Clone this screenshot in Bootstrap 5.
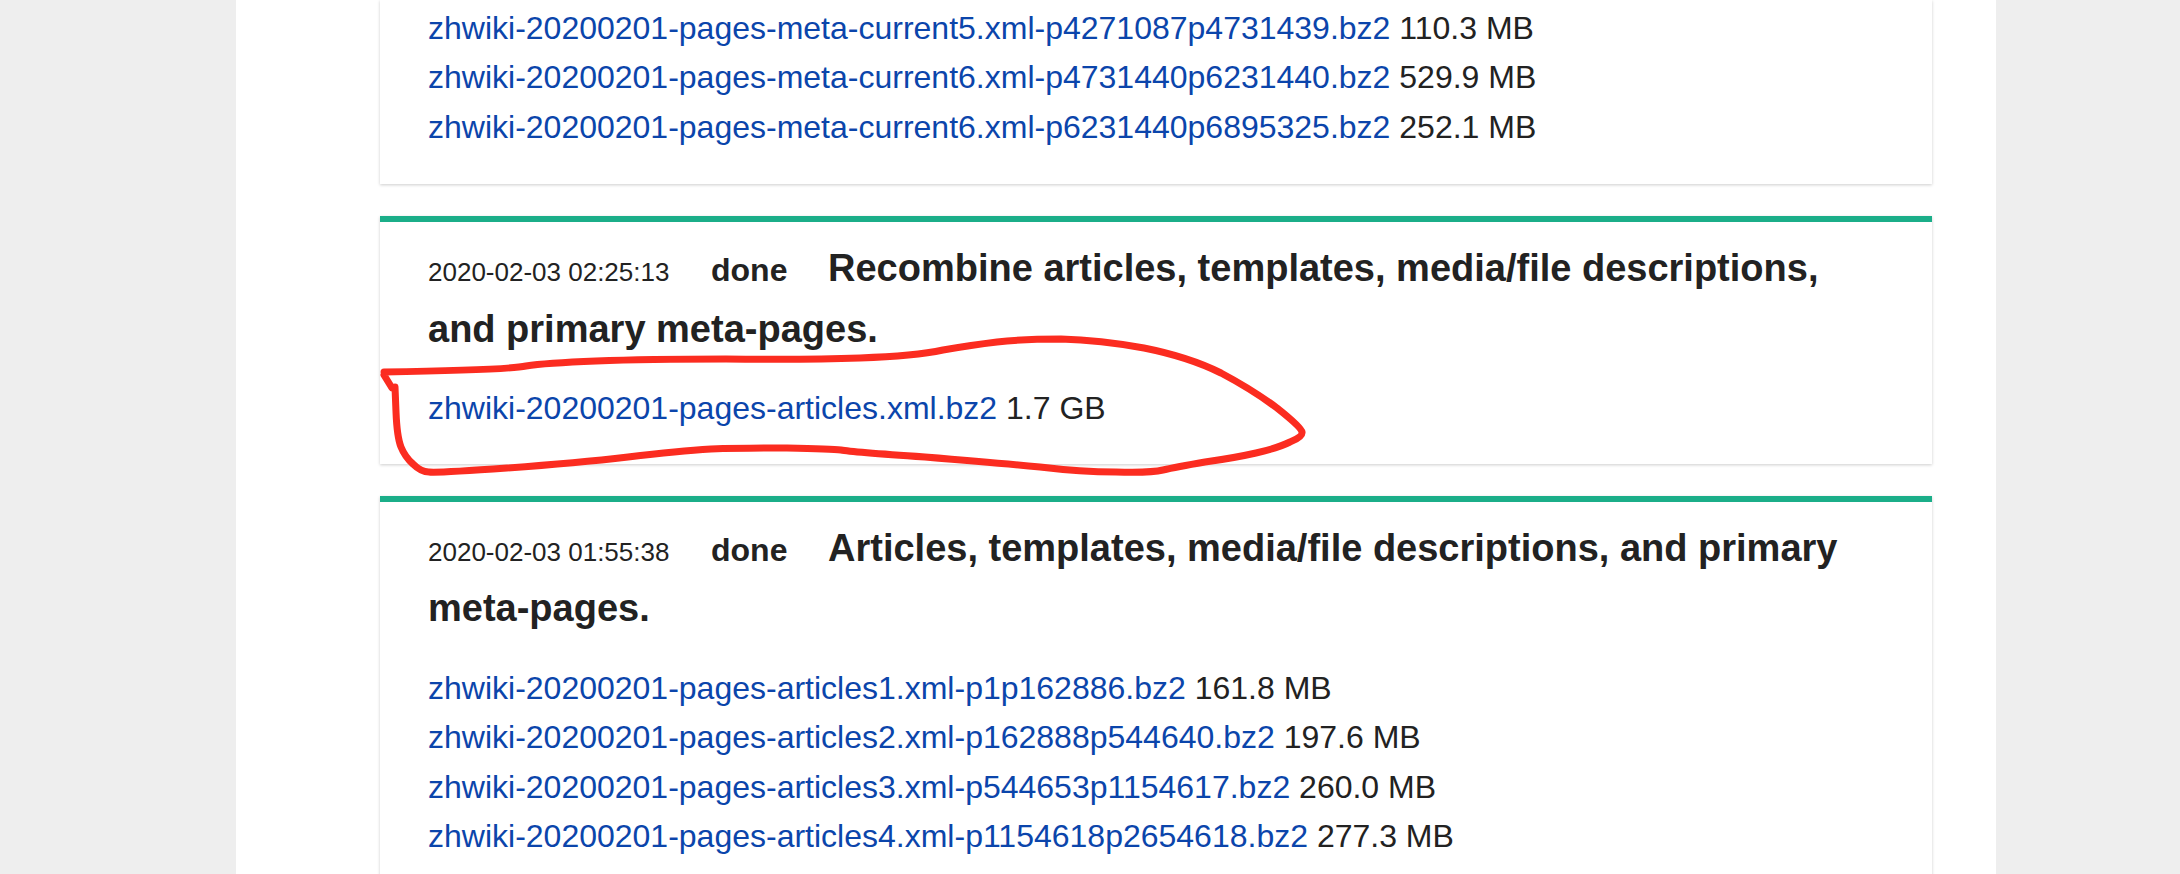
<!DOCTYPE html>
<html lang="en">
<head>
    <meta charset="UTF-8">
    <title>zhwiki dump progress</title>
    <link href="https://cdn.jsdelivr.net/npm/bootstrap@5.3.0/dist/css/bootstrap.min.css" rel="stylesheet">
    <style>
        html, body {
            height: 874px;
            overflow: hidden;
        }
        body {
            background: #eeeeee;
            font-family: "Liberation Sans", Arial, sans-serif;
            color: #222222;
        }
        .page-sheet {
            position: relative;
            width: 1760px;
            margin-left: 236px;
            height: 874px;
            overflow: hidden;
            padding: 0 64px 0 144px;
            background: #ffffff;
        }
        .dump-step {
            padding: 16px 48px 30px;
            margin-bottom: 32px;
            background: #ffffff;
            border-top: 6px solid #1bae89;
            box-shadow: 0 1px 3px rgba(0, 0, 0, .2);
        }
        .dump-step.cut-off {
            padding: 3.5px 48px 32px;
            border-top: 0;
        }
        .step-head {
            margin: 0 0 25px;
            font-size: 38px;
            line-height: 60.5px;
        }
        .step-time {
            font-size: 26px;
            line-height: 1;
            margin-right: 31px;
        }
        .step-status {
            font-size: 32px;
            line-height: 1;
            font-weight: 700;
            margin-right: 30px;
        }
        .step-title {
            font-weight: 700;
        }
        .file-list {
            font-size: 32px;
            line-height: 49.5px;
        }
        .file-list a {
            color: #0b45ab;
            text-decoration: none;
        }
        .red-circle {
            position: absolute;
            left: -236px;
            top: 0;
            pointer-events: none;
        }
    </style>
</head>
<body>
<div class="page-sheet">
    <div class="dump-step cut-off">
        <ul class="file-list list-unstyled mb-0">
            <li><a href="#">zhwiki-20200201-pages-meta-current5.xml-p4271087p4731439.bz2</a> 110.3 MB</li>
            <li><a href="#">zhwiki-20200201-pages-meta-current6.xml-p4731440p6231440.bz2</a> 529.9 MB</li>
            <li><a href="#">zhwiki-20200201-pages-meta-current6.xml-p6231440p6895325.bz2</a> 252.1 MB</li>
        </ul>
    </div>
    <div class="dump-step">
        <p class="step-head">
            <span class="step-time">2020-02-03 02:25:13</span>
            <span class="step-status">done</span>
            <span class="step-title">Recombine articles, templates, media/file descriptions, and primary meta-pages.</span>
        </p>
        <ul class="file-list list-unstyled mb-0">
            <li><a href="#">zhwiki-20200201-pages-articles.xml.bz2</a> 1.7 GB</li>
        </ul>
    </div>
    <div class="dump-step">
        <p class="step-head">
            <span class="step-time">2020-02-03 01:55:38</span>
            <span class="step-status">done</span>
            <span class="step-title">Articles, templates, media/file descriptions, and primary meta-pages.</span>
        </p>
        <ul class="file-list list-unstyled mb-0">
            <li><a href="#">zhwiki-20200201-pages-articles1.xml-p1p162886.bz2</a> 161.8 MB</li>
            <li><a href="#">zhwiki-20200201-pages-articles2.xml-p162888p544640.bz2</a> 197.6 MB</li>
            <li><a href="#">zhwiki-20200201-pages-articles3.xml-p544653p1154617.bz2</a> 260.0 MB</li>
            <li><a href="#">zhwiki-20200201-pages-articles4.xml-p1154618p2654618.bz2</a> 277.3 MB</li>
        </ul>
    </div>
    <!-- hand drawn annotation on top of the screenshot -->
    <svg class="red-circle" width="2180" height="874" viewBox="0 0 2180 874" fill="none">
        <path stroke="#fb2c20" stroke-width="7" stroke-linecap="round" stroke-linejoin="round"
              d="M384 372Q507 370 526 366Q545 363 596 361Q647 359 726 359Q806 360 860 358Q915 356 943 350Q972 345 997 342Q1023 339 1061 339Q1100 340 1144 348Q1189 357 1221 373Q1253 390 1277 408Q1301 427 1302 432Q1303 437 1290 442Q1278 448 1256 453Q1234 458 1205 462Q1176 467 1163 470Q1151 473 1116 472Q1081 472 1040 467Q998 463 925 457Q851 452 841 450Q832 449 787 448Q743 448 711 449Q679 451 628 457Q577 463 507 468Q437 473 429 472Q421 472 413 464Q405 457 401 447Q397 437 396 412L395 387L392 388L384 375"/>
    </svg>
</div>
<script src="https://cdn.jsdelivr.net/npm/bootstrap@5.3.0/dist/js/bootstrap.bundle.min.js"></script>
</body>
</html>
